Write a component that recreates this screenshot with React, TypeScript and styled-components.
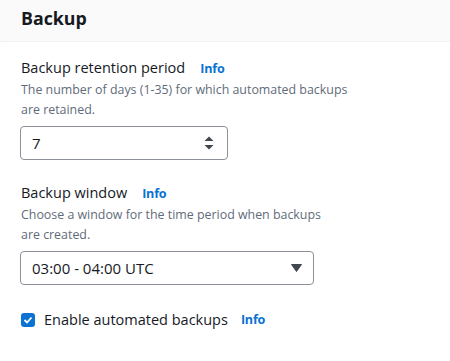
import React from "react";
import styled, { createGlobalStyle } from "styled-components";

const GlobalStyle = createGlobalStyle`
  html, body {
    margin: 0;
    padding: 0;
    background: #ffffff;
    font-family: "Open Sans", "Noto Sans", Arial, sans-serif;
    color: #16191f;
  }
`;

const Panel = styled.div`
  width: 450px;
  height: 361px;
  background: #ffffff;
  overflow: hidden;
`;

const Header = styled.div`
  background: #fafafa;
  height: 42px;
  padding: 0 21px;
  display: flex;
  align-items: center;
  border-bottom: 1px dotted #ececec;
  box-sizing: border-box;

  h2 {
    margin: 0;
    font-size: 17.8px;
    font-weight: 700;
    padding-bottom: 5px;
  }
`;

const Body = styled.div`
  padding: 15px 20px 0 21px;
  display: flex;
  flex-direction: column;
  gap: 22px;
`;

const Field = styled.div`
  display: flex;
  flex-direction: column;
`;

const Label = styled.div`
  display: flex;
  align-items: baseline;
  gap: 15px;
  font-size: 14.5px;
  line-height: 22px;
  color: #16191f;
`;

const InfoLink = styled.span`
  color: #0972d3;
  font-weight: 700;
  font-size: 12.6px;
  letter-spacing: -0.2px;
`;

const Description = styled.div<{ $max: number }>`
  font-size: 12.4px;
  line-height: 19.5px;
  color: #5f6b7a;
  max-width: ${(p) => p.$max}px;
`;

const Control = styled.div<{ $width: number }>`
  width: ${(p) => p.$width}px;
  height: 34px;
  box-sizing: border-box;
  border: 1px solid #8d9199;
  border-radius: 4px;
  margin-top: 7px;
  margin-left: -1px;
  display: flex;
  align-items: center;
  justify-content: space-between;
  padding: 0 ${(p) => (p.$width > 250 ? 11 : 13)}px 0 11px;
  font-size: 15px;
  color: #16191f;
`;

const Checkbox = styled.div`
  display: flex;
  align-items: center;
  gap: 9px;
  font-size: 14.5px;
  line-height: 22px;
  margin-top: 2px;

  ${InfoLink} {
    margin-left: 4px;
  }
`;

const Box = styled.span`
  width: 14px;
  height: 14px;
  border-radius: 3px;
  background: #0972d3;
  display: flex;
  align-items: center;
  justify-content: center;
`;

const Spinner = () => (
  <svg width="10" height="16" viewBox="0 0 10 16">
    <path d="M5 1.5 L9.5 6 H0.5 Z" fill="#414750" />
    <path d="M5 14.5 L9.5 10 H0.5 Z" fill="#414750" />
  </svg>
);

const Caret = () => (
  <svg width="11" height="9" viewBox="0 0 11 9">
    <path d="M0.5 0.5 H10.5 L5.5 7.5 Z" fill="#414750" stroke="#414750" strokeLinejoin="round" />
  </svg>
);

export default function App() {
  return (
    <>
      <GlobalStyle />
      <Panel>
        <Header>
          <h2>Backup</h2>
        </Header>
        <Body>
          <Field>
            <Label>
              Backup retention period <InfoLink>Info</InfoLink>
            </Label>
            <Description $max={340}>
              The number of days (1-35) for which automated backups are retained.
            </Description>
            <Control $width={208}>
              <span>7</span>
              <Spinner />
            </Control>
          </Field>
          <Field>
            <Label>
              Backup window <InfoLink>Info</InfoLink>
            </Label>
            <Description $max={315}>
              Choose a window for the time period when backups are created.
            </Description>
            <Control $width={294}>
              <span>03:00 - 04:00 UTC</span>
              <Caret />
            </Control>
          </Field>
          <Checkbox>
            <Box>
              <svg width="10" height="8" viewBox="0 0 10 8">
                <path d="M1.5 4 L4 6.5 L8.5 1.5" stroke="#fff" strokeWidth="1.8" fill="none" />
              </svg>
            </Box>
            Enable automated backups <InfoLink>Info</InfoLink>
          </Checkbox>
        </Body>
      </Panel>
    </>
  );
}
